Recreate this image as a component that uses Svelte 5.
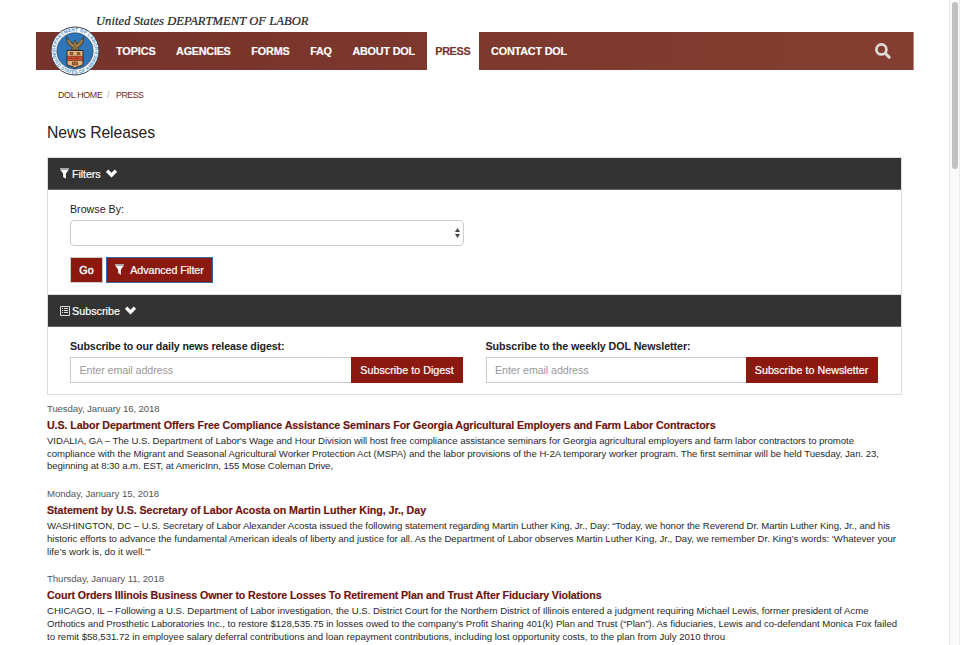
<script lang="ts">
  const nav = [
    { label: 'TOPICS', width: 39.5 },
    { label: 'AGENCIES', width: 54.5 },
    { label: 'FORMS', width: 38.5 },
    { label: 'FAQ', width: 21.5 },
    { label: 'ABOUT DOL', width: 62.5 },
    { label: 'PRESS', width: 35, active: true },
    { label: 'CONTACT DOL', width: 76 }
  ];

  const releases = [
    {
      date: 'Tuesday, January 16, 2018', dateWidth: 112.5,
      title: 'U.S. Labor Department Offers Free Compliance Assistance Seminars For Georgia Agricultural Employers and Farm Labor Contractors', titleWidth: 668.5,
      lines: [
        { text: 'VIDALIA, GA – The U.S. Department of Labor\'s Wage and Hour Division will host free compliance assistance seminars for Georgia agricultural employers and farm labor contractors to promote', width: 807 },
        { text: 'compliance with the Migrant and Seasonal Agricultural Worker Protection Act (MSPA) and the labor provisions of the H-2A temporary worker program. The first seminar will be held Tuesday, Jan. 23,', width: 832 },
        { text: 'beginning at 8:30 a.m. EST, at AmericInn, 155 Mose Coleman Drive,', width: 286 }
      ]
    },
    {
      date: 'Monday, January 15, 2018', dateWidth: 112,
      title: 'Statement by U.S. Secretary of Labor Acosta on Martin Luther King, Jr., Day', titleWidth: 379,
      lines: [
        { text: 'WASHINGTON, DC – U.S. Secretary of Labor Alexander Acosta issued the following statement regarding Martin Luther King, Jr., Day: “Today, we honor the Reverend Dr. Martin Luther King, Jr., and his', width: 843 },
        { text: 'historic efforts to advance the fundamental American ideals of liberty and justice for all. As the Department of Labor observes Martin Luther King, Jr., Day, we remember Dr. King’s words: ‘Whatever your', width: 849 },
        { text: 'life’s work is, do it well.’”', width: 103.5 }
      ]
    },
    {
      date: 'Thursday, January 11, 2018', dateWidth: 117,
      title: 'Court Orders Illinois Business Owner to Restore Losses To Retirement Plan and Trust After Fiduciary Violations', titleWidth: 554.5,
      lines: [
        { text: 'CHICAGO, IL – Following a U.S. Department of Labor investigation, the U.S. District Court for the Northern District of Illinois entered a judgment requiring Michael Lewis, former president of Acme', width: 821.5 },
        { text: 'Orthotics and Prosthetic Laboratories Inc., to restore $128,535.75 in losses owed to the company’s Profit Sharing 401(k) Plan and Trust (“Plan”). As fiduciaries, Lewis and co-defendant Monica Fox failed', width: 850 },
        { text: 'to remit $58,531.72 in employee salary deferral contributions and loan repayment contributions, including lost opportunity costs, to the plan from July 2010 throu', width: 678 }
      ]
    }
  ];

  // Adjusts tracking so that a single line of text spans the given width.
  function fit(node: HTMLElement, width: number) {
    const count = (node.textContent ?? '').length;
    const natural = node.getBoundingClientRect().width;
    if (count > 0) node.style.letterSpacing = `${(width - natural) / count}px`;
  }
</script>

{#snippet funnel()}
  <svg class="funnel" viewBox="0 0 9 11"><path d="M0 0H9V1.7H0Z" fill="#aaa" /><path d="M.3 1.8H8.7L5.9 5.6V10.8L3.1 8.9V5.6Z" fill="#fff" /></svg>
{/snippet}

{#snippet chevron()}
  <svg class="chevron" viewBox="0 0 10 8"><path d="M1 1.5L5 5.5L9 1.5" fill="none" stroke="#fff" stroke-width="3" /></svg>
{/snippet}

<div class="page">
  <div class="content">
    <header>
      <div class="brand"><span use:fit={212.5}>United States DEPARTMENT OF LABOR</span></div>
      <nav>
        <svg class="seal" viewBox="0 0 50 50">
          <defs>
            <path id="ring-top" d="M5.3 25A19.7 19.7 0 0 1 44.7 25" />
            <path id="ring-bottom" d="M2.2 25A22.8 22.8 0 0 0 47.8 25" />
          </defs>
          <circle cx="25" cy="25" r="24" fill="#fff" stroke="#343b40" stroke-width="1" />
          <text class="ring"><textPath href="#ring-top" startOffset="0" textLength="61">DEPARTMENT OF LABOR</textPath></text>
          <text class="ring"><textPath href="#ring-bottom" startOffset="0" textLength="71">UNITED STATES OF AMERICA</textPath></text>
          <circle cx="25" cy="25" r="18.2" fill="#2e75ba" stroke="#26323b" stroke-width=".6" />
          <path d="M16.5 10.5C18 13 20 16 23 18L24 15.5 25 14 26.3 15.5 27 18C30 16 32 13 33.6 10.5 34 16 32 20 28 21.5L29 24H21L22.5 21.5C18 20 16 15 16.5 10.5Z" fill="#8d703f" stroke="#292820" stroke-width=".6" />
          <path d="M18 14L23 20M32 14L27 20" stroke="#c5a15b" stroke-width=".8" />
          <path d="M17 24.5H33V39L28 40.5 25 42 22 40.5 17 39Z" fill="#e7b27c" stroke="#222" stroke-width=".9" />
          <path d="M17.4 30.2H32.6V34.5H17.4Z" fill="#d04a2b" stroke="#592818" stroke-width=".6" />
          <path d="M20 26.5h3v2h-3zM27 26.5h3v2h-3zM22.5 36h5v3h-5zM19.5 32.3h3M24 32.3h5" fill="#a76d37" stroke="#55341f" stroke-width=".6" />
        </svg>
        <ul>
          {#each nav as item}
            <li class:active={item.active}><span use:fit={item.width}>{item.label}</span></li>
          {/each}
        </ul>
        <svg class="search" viewBox="0 0 16 16"><circle cx="6.4" cy="6.4" r="5" fill="none" stroke="#dfdbd6" stroke-width="2.7" /><path d="M10.3 10.3L14.2 14.2" stroke="#dfdbd6" stroke-width="3" stroke-linecap="round" /></svg>
      </nav>
    </header>

    <div class="crumbs"><span use:fit={44.5}>DOL HOME</span><i>/</i><span use:fit={27.5}>PRESS</span></div>

    <main>
      <h1><span use:fit={108}>News Releases</span></h1>
      <section class="panel">
        <div class="bar">{@render funnel()}<span use:fit={28.5}>Filters</span>{@render chevron()}</div>
        <div class="filters">
          <div class="label"><span use:fit={54}>Browse By:</span></div>
          <div class="select">
            <svg viewBox="0 0 5 10"><path d="M0 4L2.5 0L5 4ZM0 6L2.5 10L5 6Z" fill="#444" /></svg>
          </div>
          <div class="buttons">
            <button class="go"><span use:fit={14.5}>Go</span></button>
            <button class="advanced">{@render funnel()}<span use:fit={73.5}>Advanced Filter</span></button>
          </div>
        </div>
        <div class="bar second">
          <svg class="list" viewBox="0 0 10 10"><path d="M.5 .5H9.5V9.5H.5Z" fill="none" stroke="#ddd" /><path d="M2 2.5H3M4 2.5H8M2 4.5H3M4 4.5H8M2 6.5H3M4 6.5H8" stroke="#ddd" /></svg>
          <span use:fit={48}>Subscribe</span>{@render chevron()}
        </div>
        <div class="subscribe">
          <div class="digest">
            <strong><span use:fit={214.5}>Subscribe to our daily news release digest:</span></strong>
            <div class="group">
              <div class="input"><span use:fit={93.5}>Enter email address</span></div>
              <button><span use:fit={93.5}>Subscribe to Digest</span></button>
            </div>
          </div>
          <div class="newsletter">
            <strong><span use:fit={205}>Subscribe to the weekly DOL Newsletter:</span></strong>
            <div class="group">
              <div class="input"><span use:fit={93.5}>Enter email address</span></div>
              <button><span use:fit={113.5}>Subscribe to Newsletter</span></button>
            </div>
          </div>
        </div>
      </section>

      {#each releases as release}
        <article>
          <div class="date"><span use:fit={release.dateWidth}>{release.date}</span></div>
          <h2><span use:fit={release.titleWidth}>{release.title}</span></h2>
          {#each release.lines as line}
            <div class="line"><span use:fit={line.width}>{line.text}</span></div>
          {/each}
        </article>
      {/each}
    </main>
  </div>
  <div class="track"><div class="thumb"></div></div>
</div>

<style>
  * { box-sizing: border-box; }
  .page { display: flex; width: 960px; height: 645px; overflow: hidden; background: #fff; color: #222; font-family: "Liberation Sans", Arial, sans-serif; font-size: 10.5px; }
  .content { flex: 1; min-width: 0; }
  span { display: inline-block; white-space: nowrap; }
  svg { display: block; flex: none; }
  .brand { height: 32px; padding: 14px 0 0 96px; font: italic 12.5px/15px "Liberation Serif", "Times New Roman", serif; color: #222; -webkit-text-stroke: .2px; }
  nav { display: flex; width: 878px; height: 38px; margin-left: 36px; background: linear-gradient(90deg, #76332b, #843e31); border-right: 1px solid #b58b84; }
  .seal { width: 50px; height: 50px; margin: -6px 0 0 14px; }
  .ring { font-size: 4.7px; font-weight: bold; fill: #4f91c9; }
  ul { display: flex; flex: 1; list-style: none; margin: 0; padding: 0 0 0 7.5px; }
  li { height: 38px; padding: 0 8.5px; margin-right: 3.6px; color: #fff; font-size: 10.8px; line-height: 38px; font-weight: bold; -webkit-text-stroke: .15px; }
  li.active { background: #fff; color: #76332b; padding-left: 8.3px; padding-right: 8.7px; }
  .search { width: 16px; height: 16px; margin: 11px 22px 0 0; }
  .crumbs { display: flex; height: 50px; padding: 19px 0 0 58px; font-size: 8.9px; line-height: 13px; color: #711f18; }
  .crumbs i { width: 13.5px; padding-left: 4.5px; color: #aaa; font-style: normal; }
  main { width: 855px; margin-left: 47px; }
  h1 { height: 37px; margin: 0; padding-top: 3px; font-size: 15.7px; line-height: 20px; font-weight: normal; }
  .panel { height: 238px; border: 1px solid #ddd; }
  .bar { display: flex; align-items: center; height: 32px; padding: 1px 0 0 12px; background: #333; color: #fff; border-bottom: 1px solid #666; font-size: 10.7px; -webkit-text-stroke: .2px; }
  .bar .funnel { width: 9px; height: 11px; margin: -2px 3px 0 0; }
  .bar .chevron { width: 11px; height: 9px; margin: -2px 0 0 5px; }
  .bar .list { width: 10px; height: 10px; margin-right: 2px; }
  .filters { height: 105px; padding: 12px 22px 0; border-bottom: 1px solid #ddd; }
  .label { height: 18px; line-height: 14px; font-size: 10.7px; }
  .select { display: flex; align-items: center; justify-content: flex-end; width: 394px; height: 26px; border: 1px solid #ccc; border-radius: 4px; padding-right: 3px; }
  .select svg { width: 5px; height: 10px; }
  .buttons { display: flex; gap: 3px; margin-top: 11px; }
  button { display: flex; align-items: center; justify-content: center; margin: 0; padding: 0; border: 1px solid #8b1910; background: #8b1910; color: #fff; font: 10.7px "Liberation Sans", Arial, sans-serif; -webkit-text-stroke: .2px; }
  .go { width: 33px; height: 26px; border-color: #ccc; -webkit-text-stroke: .4px; }
  .advanced { width: 107px; height: 26px; border-color: #3465a4; }
  .advanced .funnel { width: 9px; height: 11px; margin: -2px 6px 0 0; }
  .second { height: 32px; }
  .subscribe { display: flex; padding: 12px 23px 0 22px; }
  .digest { width: 393px; margin-right: 22.5px; }
  .newsletter { width: 392px; }
  strong { display: block; height: 18px; font-size: 10.7px; line-height: 15px; }
  .group { display: flex; height: 26px; }
  .input { flex: 1; border: 1px solid #ccc; border-right: 0; padding-left: 8.5px; line-height: 24px; color: #999; font-size: 10.7px; }
  .digest button { width: 112px; }
  .newsletter button { width: 132px; }
  article { height: 85.3px; padding-top: 7.5px; }
  .date { height: 13px; line-height: 11px; font-size: 9.6px; color: #555; }
  h2 { height: 19.3px; margin: 0; line-height: 19px; font-size: 10.7px; color: #6d120d; -webkit-text-stroke: .15px; }
  .line { height: 12.8px; line-height: 12.8px; font-size: 9.6px; color: #292929; }
  .track { width: 11px; background: #fafafa; border-left: 1px solid #e7e7e7; border-right: 1px solid #ededed; padding: 2px 0 0 2px; }
  .thumb { width: 6px; height: 167px; border-radius: 3px; background: #c1c1c1; }
</style>
